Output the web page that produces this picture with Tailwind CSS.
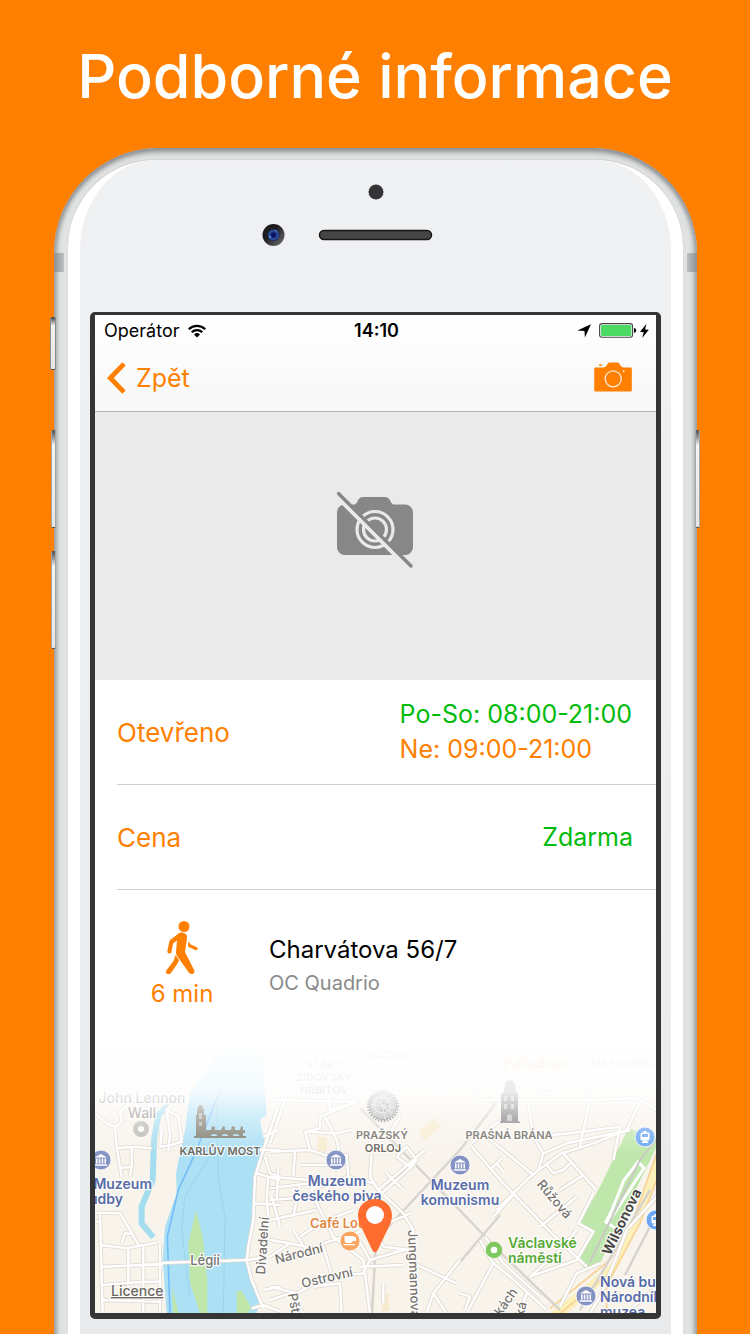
<!DOCTYPE html>
<html lang="cs">
<head>
<meta charset="utf-8">
<meta name="viewport" content="width=device-width, initial-scale=1">
<title>Podborné informace</title>
<script src="https://cdn.jsdelivr.net/npm/@tailwindcss/browser@4"></script>
</head>
<body class="h-screen overflow-hidden bg-[#ff8000] font-['Inter','Noto_Sans',sans-serif]">
<div class="flex flex-col">
<h1 class="h-[148px] pt-[40px] text-center text-[61px] leading-[72px] font-medium text-white whitespace-nowrap">Podborné informace</h1>

<main class="relative mr-[53px] ml-[54px] rounded-t-[105px] bg-[#e1e3e3] px-[14px] pt-[11px] shadow-[inset_0_5px_5px_-1px_#8d8f92,inset_4px_0_4px_-1px_#a4a6a8,inset_-4px_0_4px_-1px_#a4a6a8]">
  <!-- side buttons and antenna bands -->
  <span class="absolute top-[169px] -left-[4px] h-[53px] w-[6px] rounded-[2px] border border-[#8b8b8b] border-y-[#555] bg-linear-to-b from-[#555] via-[#f2f2f2] via-15% to-[#e6e6e6]"></span>
  <span class="absolute top-[282px] -left-[3px] h-[98px] w-[5px] rounded-[2px] border border-[#a5a5a5] border-y-[#555] bg-linear-to-b from-[#555] via-[#f5f5f5] via-15% to-[#e6e6e6]"></span>
  <span class="absolute top-[403px] -left-[3px] h-[98px] w-[5px] rounded-[2px] border border-[#a5a5a5] border-y-[#555] bg-linear-to-b from-[#555] via-[#f5f5f5] via-15% to-[#e6e6e6]"></span>
  <span class="absolute top-[282px] -right-[3px] h-[98px] w-[5px] rounded-[2px] border border-[#a5a5a5] border-y-[#555] bg-linear-to-b from-[#555] via-[#f5f5f5] via-15% to-[#e6e6e6]"></span>
  <span class="absolute top-[105px] left-0 h-[19px] w-[10px] bg-linear-to-r from-[#8e9092] to-[#bfc1c3]"></span>
  <span class="absolute top-[105px] right-0 h-[19px] w-[10px] bg-linear-to-l from-[#8e9092] to-[#bfc1c3]"></span>

  <div class="rounded-t-[88px] border-t border-[#d6d8d9] bg-white px-[12px] shadow-[0_0_1px_#bbb]">
    <div class="rounded-t-[76px_90px] bg-linear-to-b from-[#f0f1f3] to-[#e9eaec] px-[10px] pb-[40px]">
      <header class="h-[152px]" aria-hidden="true">
        <svg class="mx-auto block h-[152px] w-[240px]" viewBox="256 160 240 152">
          <defs>
            <radialGradient id="lens"><stop offset="0" stop-color="#08105a"/><stop offset=".35" stop-color="#0d1a66"/><stop offset=".7" stop-color="#3358a8"/><stop offset="1" stop-color="#14245a"/></radialGradient>
            <linearGradient id="ring" x1="0" y1="0" x2="1" y2="1"><stop offset=".4" stop-color="#1d1d1f"/><stop offset="1" stop-color="#77777a"/></linearGradient>
          </defs>
          <circle cx="376" cy="192" r="7.5" fill="#343436"/>
          <circle cx="273.500" cy="235" r="11" fill="url(#ring)"/>
          <circle cx="273.500" cy="235" r="6" fill="url(#lens)"/>
          <circle cx="270" cy="237" r="1" fill="#7ba0e8"/>
          <circle cx="276" cy="231" r="1" fill="#4c70c8"/>
          <rect x="319.500" y="230.500" width="112" height="9" rx="4.500" fill="#454545" stroke="#161616" stroke-width="1.500"/>
        </svg>
      </header>

      <section class="overflow-hidden rounded-[5px] border-x-[5px] border-t-[3px] border-b-[6px] border-[#353535] bg-white">
        <div class="border-b border-[#b4b4b4] bg-linear-to-b from-white to-[#f7f7f7]">
          <div class="grid h-[31px] grid-cols-3 items-center pr-[7px] pl-[9px] text-[18px] leading-[24px] text-black">
            <div class="flex items-center gap-[9px]">
              <span>Operátor</span>
              <svg class="h-[14px] w-[18px]" viewBox="0 0 18 14" fill="none" stroke="#000" stroke-width="2.200" aria-hidden="true">
                <path d="M.8 5.200a11.800 11.800 0 0 1 16.400 0M3.700 8.200a7.700 7.700 0 0 1 10.600 0"/>
                <path d="M6 10.400a4.300 4.300 0 0 1 6 0L9 13.400z" fill="#000" stroke="none"/>
              </svg>
            </div>
            <div class="text-center font-semibold">14:10</div>
            <div class="flex items-center justify-end gap-[3px]">
              <svg class="mr-[5px] h-[14px] w-[14px]" viewBox="0 0 14 14" aria-hidden="true"><path d="M14 .3 7.900 13.600 7.500 6.900.3 6.500z"/></svg>
              <svg class="h-[15px] w-[38px]" viewBox="0 0 38 15" aria-hidden="true">
                <rect x=".600" y=".600" width="33" height="13.600" rx="2.500" fill="#fff" stroke="#444" stroke-width="1.100"/>
                <rect x="1.900" y="1.900" width="30.500" height="11" rx="1.300" fill="#4cd964"/>
                <path d="M35 5q2.200.3 2.200 2.400T35 9.800z"/>
              </svg>
              <svg class="h-[14px] w-[9px]" viewBox="0 0 9 14" aria-hidden="true"><path d="M6.400 0 0 7.800l3.700.4L2.200 14 8.800 5.800l-3.700-.4z"/></svg>
            </div>
          </div>
          <nav class="flex h-[65px] items-center justify-between pr-[24px] pb-[1px] pl-[12px] text-[#ff8000]">
            <button type="button" class="flex items-center gap-[10px] text-[25px] leading-[32px]">
              <svg class="h-[32px] w-[19px]" viewBox="0 0 19 32" fill="none" stroke="currentColor" stroke-width="4.800" aria-hidden="true"><path d="M17 1.800 3.300 16 17 30.200"/></svg>
              <span>Zpět</span>
            </button>
            <button type="button" aria-label="Vyfotit" class="pb-[2px]">
              <svg class="h-[30px] w-[38px]" viewBox="0 0 38 30" aria-hidden="true">
                <path fill="currentColor" d="M1.500 5.500H9c2.500 0 3-1 4-2.500C13.800 1.300 14.500.6 16 .6h7c1.500 0 2.300.7 3.200 2.400 1 1.500 1.400 2.500 4 2.500h6.300q1.300 0 1.300 1.300v21.400q0 1.300-1.300 1.300h-35Q.200 29.500.2 28.200V6.800Q.200 5.500 1.500 5.500M5.500 2.200h2.200q.6 0 .6.800t-.6.800H5.500q-.6 0-.6-.8t.6-.8"/>
                <circle cx="19.200" cy="16.800" r="8" fill="none" stroke="#fae7d4" stroke-width="1.300"/>
                <circle cx="29.700" cy="9.300" r="1" fill="#fae7d4"/>
              </svg>
            </button>
          </nav>
        </div>

        <div class="flex h-[268px] items-center justify-center bg-[#eaeaea] pr-[2px]">
          <svg class="mb-[32px] h-[76px] w-[76px]" viewBox="0 0 76 76" role="img" aria-label="Bez fotografie">
            <path fill="#878787" d="M8 12.500h9c4 0 3-7.500 9-7.500h22c6 0 5 7.500 9 7.500h11a8 8 0 0 1 8 8V55a8 8 0 0 1-8 8H8a8 8 0 0 1-8-8V20.500a8 8 0 0 1 8-8"/>
            <g fill="none" stroke="#eaeaea" stroke-width="3.200"><circle cx="38" cy="37.500" r="18"/><circle cx="38" cy="37.500" r="11.500"/></g>
            <path d="M-1 4 70 75" stroke="#eaeaea" stroke-width="4" fill="none"/>
            <path d="m1.500 1.500 72.500 72.500" stroke="#878787" stroke-width="3.400" stroke-linecap="round"/>
          </svg>
        </div>

        <dl class="pl-[22px] text-[25px] leading-[35px]">
          <div class="flex h-[105px] items-center justify-between border-b border-[#cfcfcf] pr-[24px]">
            <dt class="text-[26px] text-[#ff8000]">Otevřeno</dt>
            <dd class="text-[#00bb0b]">Po-So: 08:00-21:00<br><span class="text-[#ff8000]">Ne: 09:00-21:00</span></dd>
          </div>
          <div class="flex h-[105px] items-center justify-between border-b border-[#cfcfcf] pr-[23px]">
            <dt class="text-[26px] text-[#ff8000]">Cena</dt>
            <dd class="text-[#00bb0b]">Zdarma</dd>
          </div>
        </dl>

        <div class="flex h-[140px] items-start pt-[31px]">
          <div class="flex w-[174px] flex-col items-center text-[24px] leading-[38px] text-[#ff8000]">
            <svg class="h-[54px] w-[32px]" viewBox="0 0 32 54" aria-hidden="true">
              <g fill="currentColor">
                <circle cx="18" cy="5.500" r="5.500"/>
                <path d="M12.500 12.500Q15 11 18 12q3.500 1 3 5L19 31l9.300 18.500q.6 2.800-1.800 3.500-2.200.3-3.700-1.500L11 35q-1.300-2-1-4l1-11.500L7 22.500 5.500 31q-.7 1.800-2.500 1.500-2-.4-1.600-2.500L3.300 20.500q.4-1 1.200-1.800z"/>
                <path d="M22.500 20.500 25 23.800l5.500 2.200q1.600.8 1 2.200-.7 1.200-2.300.8L22.800 26l-1-1z"/>
                <path d="M9.500 34 13 39.200 11.300 43 4.700 52.300Q2.700 54 .8 52.800-.700 51.300.3 49.500L7.500 40z"/>
              </g>
            </svg>
            <span>6 min</span>
          </div>
          <address class="pt-[11px] not-italic">
            <p class="text-[24px] leading-[36px] text-black">Charvátova 56/7</p>
            <p class="text-[20px] leading-[30px] text-[#8a8a8a]">OC Quadrio</p>
          </address>
        </div>

        <svg class="block h-auto w-full" viewBox="95 1030 561 283" font-family="Inter, 'Noto Sans', sans-serif" role="group" aria-label="Mapa">
          <defs>
            <linearGradient id="fade" gradientUnits="userSpaceOnUse" x1="0" y1="1030" x2="0" y2="1155">
              <stop offset="0" stop-color="#fff"/><stop offset=".2" stop-color="#fff" stop-opacity=".95"/><stop offset=".5" stop-color="#fff" stop-opacity=".85"/><stop offset=".7" stop-color="#fff" stop-opacity=".42"/><stop offset="1" stop-color="#fff" stop-opacity="0"/>
            </linearGradient>
            <g id="museum"><circle r="10" fill="#8493c3" stroke="#fff" stroke-width=".8"/><path d="M-6.200-2.600 0-6l6.200 3.400zM-5-1.500h1.600v5H-5zm2.800 0h1.500v5h-1.500zm2.900 0h1.500v5H.7zm2.800 0H5v5H3.500zM-6.200 4.200H6.200v1.500H-6.200z" fill="#fff"/></g>
            <g id="tram"><circle r="10" fill="#6aa6f2" stroke="#fff" stroke-width=".8"/><path d="M-1.500-6h3v1.500H3q1.500 0 1.500 1.500v5Q4.500 3.500 3 3.500H-3Q-4.500 3.500-4.500 2v-5q0-1.500 1.500-1.500h1.500zM-3.500 6l1.500-2.200h4L3.500 6z" fill="#fff"/><path d="M-3-3h6v3h-6z" fill="#6aa6f2"/></g>
            <g id="roads">
              <g transform="translate(90 1030) scale(.33333)">
                <path d="M15 250 50 280 75 290 95 275 90 245 120 220 170 235M75 290 80 350 95 440M80 355 130 350 185 355M125 350 125 410 90 415M125 410 120 440M15 548 90 550 120 600 145 645M15 575H28M30 550 38 850M30 645 110 655 200 638M95 640 105 610 130 612M115 655 115 810M38 710 160 705H218M38 765 160 755H215M40 810 210 815M160 650V850M210 640V850M15 130 60 150 70 200M60 150 110 120 105 60M250 190 310 120 320 70M235 160 300 110M215 300 210 350 245 345 275 335 265 260 230 240 240 310 235 365M230 240 245 225"/>
                <path d="M565 230 525 345 495 440 490 570 475 650 470 690 485 750 520 835M160 705 230 698 475 690 530 680M520 320 565 300M510 360H570M525 380 540 430 570 440M500 430 570 450M495 520 570 525M535 440 530 510 535 560M485 835 520 825 570 845M545 500 570 590M520 780 570 770"/>
              </g>
              <g transform="translate(270 1030) scale(.33333)">
                <path d="M0 210 260 215 265 170M60 165 0 340M260 215 150 260 150 295 105 305 120 360M105 305 200 310 245 300M0 365 120 360 180 380 230 375 235 440M165 260 200 330 215 400M95 405H170M0 440 120 450 130 500 190 620 280 690 300 850M0 475 120 460M75 365 70 440M120 480 235 440 310 460M305 370 300 440 325 480 400 550 430 600 425 640M325 480 465 360M330 495 435 400M350 430 395 475M380 380 410 350 440 390 420 410 380 380M0 510 130 500M0 570 140 540M90 620 150 580 250 540M0 630 60 640 150 660M60 640 0 680M160 640 270 605 330 590 420 550M260 620 300 690 400 660 420 660M300 690 280 730 160 745 80 790 0 770M270 710 400 705M130 770 210 760 215 850M160 650 190 750M320 600 340 650 420 660M340 820V760M430 700 560 760M470 850 490 790 570 690M490 790 530 850M90 460 70 560M70 600 120 680M25 410 20 510M170 160 180 240 230 225M100 150 120 210M0 810 60 790 100 850M265 170 380 240 390 260 365 300"/>
                <path d="M310 60 340 130 390 90M460 130 490 110 540 150 510 180M180 120 260 100 290 200"/>
              </g>
              <g transform="translate(460 1030) scale(.33333)">
                <path d="M50 210 390 210 530 205 590 240M205 220 220 320 250 370 235 420 200 450 110 540M390 210 370 300 360 350M540 215 500 300 400 340 305 370 235 420M35 340 110 280 180 250M35 350 130 460 280 615 380 710M80 320 220 435M95 415 125 385M110 400 130 425M220 320 330 310 480 290M250 370 320 340 510 300M305 365 400 470 410 480M260 405 280 430 310 420 330 400M300 480 370 435M160 495 100 560M240 590 350 500M355 580 400 605 350 690 210 740 290 670 350 600M60 630 100 700 150 740 260 840M75 620 130 700 240 800M100 700 20 850M200 790 180 850M0 790 30 800 15 840M480 290 460 390M400 490 355 580M390 850 420 800 470 680 500 600 590 500M520 830 590 770M300 830 350 730 420 700M55 60 50 200M0 130 100 110M390 100V200M240 140 235 190 280 190"/>
              </g>
            </g>
          </defs>
          <rect x="95" y="1030" width="561" height="283" fill="#f8f3eb"/>
          <g transform="translate(90 1030) scale(.33333)">
            <path d="M390 60 300 190 285 300 258 430 260 490 225 590 218 690 230 850H500L510 800 480 740 470 650 490 560 495 450 530 350 520 320 510 270 530 255 525 190 515 60z" fill="#ace0f5"/>
            <path d="M240 220 205 255 192 330 188 450 155 530 155 580 190 622" fill="none" stroke="#a5ddf0" stroke-width="18"/>
            <path d="M318 542 295 640 300 760 330 850H352L352 750 338 620zM246 770 250 850H266zM440 850 440 785 455 782 485 835 470 850z" fill="#c0e6aa"/>
            <path d="M390 180 320 360 265 480 232 620 240 850" fill="none" stroke="#74bdf8" stroke-width="5"/>
            <path d="M420 80 380 230 385 450 405 560 400 850M370 360 285 500 275 600 300 800" fill="none" stroke="#9ad5ec" stroke-width="3"/>
          </g>
          <g transform="translate(460 1030) scale(.33333)">
            <path d="M505 295 590 325 590 350 420 700 380 725 355 690 400 605 360 580 420 470z" fill="#bfe7ab"/>
            <path d="M590 370 525 560 470 690 270 850H320L460 730 480 700 540 570 590 450z" fill="#fdf0b8"/>
            <path d="M590 370 520 570 450 690 270 835M590 450 540 580 475 700 440 770 440 850M300 850 460 720" fill="none" stroke="#f9d294" stroke-width="5"/>
          </g>
          <path d="M419 1132l14-14 9 8-18 14zM318 1137h9v14h-9zM382 1294h7v17h-7z" fill="#f7ebcf"/>
          <g fill="none" stroke="#d8d4cd" stroke-width="2.500">
            <path d="M360 1108 450 1200 500 1252 560 1310M460 1150 376 1240 372 1313M496 1103 460 1150M460 1262 500 1215M580 1310 650 1190M625 1275 656 1215"/>
          </g>
          <use href="#roads" fill="none" stroke="#dcd6cd" stroke-width="12" stroke-linejoin="round"/>
          <use href="#roads" fill="none" stroke="#fff" stroke-width="7.500" stroke-linejoin="round"/>
          <path d="M608 1223 644 1168 638 1162 624 1180 612 1210 606 1222 615 1228" fill="none" stroke="#fff" stroke-width="3"/>
          <path d="M590 1262 640 1160 656 1140" fill="none" stroke="#c9c8c4" stroke-width="2"/>

          <!-- landmarks -->
          <g fill="#7c796c">
            <path d="M196 1137v-22h1v-5l2-5h3l2 5v5h2v22zM194 1136h52v2h-52zM206 1130h39v3h-2v4h-3q-1-3-4-3t-4 3h-3q-1-3-4-3t-4 3h-3q-1-3-4-3t-4 3h-4zM211 1130l1-4 3 1v3zM221 1130l2-4 2 1v3zM231 1130l1-4 3 1v3zM240 1130l1-4 2 1v3z"/>
            <path d="M199 1113h3v6h-3zM199 1122h3v4h-3z" fill="#aeb3ad"/>
            <path d="M501 1121v-28l3-1 1-8 2-3h1l2-1 2 1h1l2 3 1 8 2 1v28l2 1v1h-20v-1z" fill="#777"/>
            <path d="M504 1096h3v5h-3zM511 1096h3v5h-3zM504 1104h3v5h-3zM511 1104h3v5h-3zM507 1121v-5q3-4 5 0v5z" fill="#bbb"/>
          </g>
          <g fill="none" stroke="#777">
            <circle cx="383" cy="1106" r="13.500" fill="#b5b5b5"/><circle cx="383" cy="1106" r="15" stroke-dasharray="1.500 1.500" stroke-width="2"/><circle cx="382" cy="1105" r="8" stroke="#eee"/><circle cx="384" cy="1107" r="4"/><path d="M370 1104 396 1108M380 1094 385 1119M373 1098 393 1114M373 1115 392 1097" stroke="#ddd"/>
          </g>
          <circle cx="141" cy="1129" r="5.500" fill="#fff" stroke="#b9b7b3" stroke-width="5"/>
          <circle cx="494" cy="1250" r="5.800" fill="#fff" stroke="#7fc95e" stroke-width="5"/>
          <use href="#museum" x="101" y="1160"/><use href="#museum" x="336" y="1160"/><use href="#museum" x="460" y="1165"/><use href="#museum" x="586" y="1296"/>
          <use href="#tram" x="645" y="1137"/><use href="#tram" x="656" y="1220"/>
          <circle cx="350" cy="1241" r="10" fill="#f7a560" stroke="#fff" stroke-width=".8"/>
          <path d="M344.500 1236h9v1h2.500v4h-3q-1 2-2.500 2h-3q-3 0-3-3zM343.500 1244h11.500v1.300h-11.500z" fill="#fff"/>

          <!-- labels -->
          <g font-size="12" font-weight="600" text-anchor="middle" stroke="#fff" stroke-width="2.500" stroke-linejoin="round" paint-order="stroke" stroke-opacity=".8">
            <g font-size="14" font-weight="500" fill="#8c8984"><text x="142" y="1103">John Lennon</text><text x="142" y="1118">Wall</text></g>
            <g font-size="11" fill="#67645a"><text x="220" y="1155">KARLŮV MOST</text><text x="382" y="1139">PRAŽSKÝ</text><text x="383" y="1152">ORLOJ</text><text x="509" y="1139">PRAŠNÁ BRÁNA</text></g>
            <g font-size="11" fill="#aaa7a0"><text x="324" y="1068">STARÝ</text><text x="324" y="1081">ŽIDOVSKÝ</text><text x="324" y="1094">HŘBITOV</text></g>
            <text x="388" y="1058" font-size="14" fill="#999">muzeum</text>
            <text x="537" y="1068" font-size="14" fill="#f0a35f">Palladium</text><text x="591" y="1067" text-anchor="start" fill="#999" font-weight="500">Na Florenci</text>
            <g font-size="14" fill="#596ca8"><text x="152" y="1189" text-anchor="end">Muzeum</text><text x="123" y="1204" text-anchor="end">hudby</text><text x="337" y="1186">Muzeum</text><text x="337" y="1201">českého piva</text><text x="460" y="1190">Muzeum</text><text x="460" y="1205">komunismu</text><g text-anchor="start"><text x="600" y="1287">Nová budova</text><text x="600" y="1302">Národního</text><text x="600" y="1317">muzea</text></g></g>
            <g text-anchor="start" font-size="14"><text x="310" y="1228" font-size="13" fill="#e18843">Café Louvre</text><g fill="#59a936"><text x="508" y="1248">Václavské</text><text x="508" y="1263">náměstí</text></g></g>
            <g font-size="13" font-weight="500" fill="#77746f">
              <text x="205" y="1265">Légií</text>
              <text transform="translate(267 1246) rotate(-86)">Divadelní</text>
              <text transform="translate(300 1258) rotate(-14)">Národní</text>
              <text transform="translate(328 1282) rotate(-13)">Ostrovní</text>
              <text transform="translate(288 1294) rotate(80)" text-anchor="start">Pštrossova</text>
              <text transform="translate(408 1230) rotate(88)" text-anchor="start">Jungmannova</text>
              <text transform="translate(551 1202) rotate(50)">Růžová</text>
              <text transform="translate(518 1292) rotate(-55)" text-anchor="end">Ve Smečkách</text>
              <text transform="translate(527 1303) rotate(-75)" text-anchor="end">Krakovská</text>
            </g>
            <text transform="translate(626 1224) rotate(-64)" font-size="14" font-weight="700" fill="#4a4947">Wilsonova</text>
          </g>
          <rect x="95" y="1030" width="561" height="126" fill="url(#fade)"/>
          <a href="#licence"><text x="111" y="1296" font-size="14" font-weight="500" fill="#6b6964" text-decoration="underline" stroke="#fff" stroke-width="2" stroke-opacity=".7" paint-order="stroke">Licence</text></a>
          <path d="M375 1199c9.500 0 17 7 17 16.500 0 5-2 9-4 13l-10.500 22q-2.500 3.500-5 0l-10.500-22c-2-4-4-8-4-13 0-9.500 7.500-16.500 17-16.500" fill="#ff6c2f"/>
          <circle cx="375" cy="1215" r="9" fill="#fff"/>
        </svg>
      </section>
    </div>
  </div>
</main>
</div>
</body>
</html>
